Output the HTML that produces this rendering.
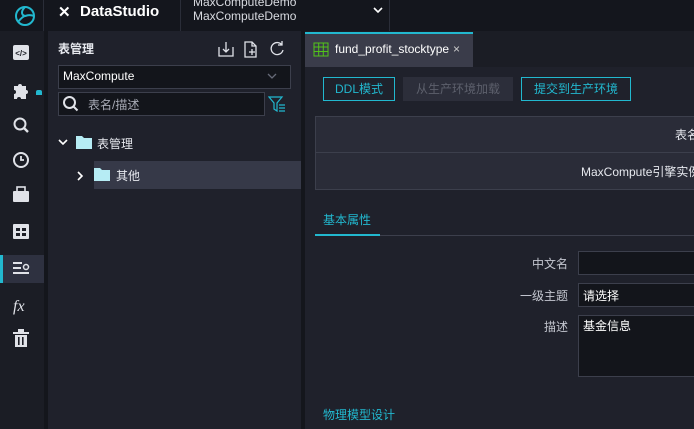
<!DOCTYPE html>
<html><head><meta charset="utf-8"><style>
*{margin:0;padding:0;box-sizing:border-box}
body{width:694px;height:429px;overflow:hidden;background:#1f212b;font-family:"Liberation Sans","Noto Sans CJK SC",sans-serif;color:#e6e8ee;font-size:12px;position:relative}
.a{position:absolute;white-space:nowrap}
</style></head><body>
<!-- top bar -->
<div class="a" style="left:0;top:0;width:694px;height:31px;background:#14161d"></div>
<div class="a" style="left:43px;top:0;width:1px;height:31px;background:#2a2d38"></div>
<div class="a" style="left:180px;top:0;width:1px;height:31px;background:#2a2d38"></div>
<div class="a" style="left:389px;top:0;width:1px;height:31px;background:#2a2d38"></div>
<svg class="a" style="left:12px;top:3px" width="26" height="26" viewBox="0 0 26 26" fill="none" stroke="#22b8cf" stroke-width="2"><circle cx="13" cy="13" r="9"/><path d="M13 4c-4 4-4 8 0 9M22 13c-5-2-8 0-9 0M6 19c3-4 6-6 7-6"/></svg>
<div class="a" style="left:58px;top:3px;font-size:15px;font-weight:bold;color:#fff">✕</div>
<div class="a" style="left:80px;top:3px;font-size:15px;font-weight:bold;color:#fff">DataStudio</div>
<div class="a" style="left:193px;top:-5px;font-size:12px;color:#d8dae0;line-height:14px">MaxComputeDemo<br>MaxComputeDemo</div>
<svg class="a" style="left:372px;top:5px" width="12" height="10"><path d="M2 3l4 4 4-4" stroke="#fff" stroke-width="1.6" fill="none"/></svg>
<!-- left icon bar -->
<div class="a" style="left:0;top:31px;width:44px;height:398px;background:#1b1d25"></div>
<div class="a" style="left:44px;top:31px;width:4px;height:398px;background:#14161c"></div>
<div class="a" style="left:0;top:255px;width:44px;height:28px;background:#2e3140"></div>
<div class="a" style="left:0;top:255px;width:3px;height:28px;background:#22b8cf"></div>
<svg class="a" style="left:10px;top:40px" width="24" height="320" fill="#e0e2e8">
<rect x="3" y="5" width="16" height="15" rx="2"/><text x="11" y="16" font-size="8" fill="#1b1d25" text-anchor="middle" font-weight="bold">&lt;/&gt;</text>
<path d="M4 46h4a2 2 0 014 0h4v4a2 2 0 010 4v5h-5a2 2 0 00-4 0H4v-5a2 2 0 000-4z"/>
<circle cx="10" cy="84" r="5.5" fill="none" stroke="#e0e2e8" stroke-width="2"/><path d="M14 88l4 4" stroke="#e0e2e8" stroke-width="2.4"/>
<circle cx="11" cy="120" r="7" fill="none" stroke="#e0e2e8" stroke-width="2"/><path d="M11 116v4h3" stroke="#e0e2e8" stroke-width="1.8" fill="none"/>
<rect x="3" y="151" width="16" height="11" rx="1"/><rect x="7" y="147" width="8" height="5" fill="none" stroke="#e0e2e8" stroke-width="1.6"/>
<rect x="3" y="184" width="16" height="15" rx="1"/><rect x="6" y="188" width="4" height="3" fill="#1b1d25"/><rect x="12" y="188" width="4" height="3" fill="#1b1d25"/><rect x="6" y="193" width="4" height="3" fill="#1b1d25"/><rect x="12" y="193" width="4" height="3" fill="#1b1d25"/>
<rect x="3" y="222" width="9" height="2"/><rect x="3" y="227" width="8" height="2"/><rect x="3" y="232" width="16" height="2"/><circle cx="16" cy="227" r="2.5" fill="none" stroke="#e0e2e8" stroke-width="1.5"/>
<text x="3" y="271" font-size="16" font-style="italic" font-family="Liberation Serif">fx</text>
<rect x="3" y="292" width="16" height="2"/><rect x="8" y="289" width="6" height="3"/><rect x="5" y="295" width="12" height="12"/><rect x="8" y="297" width="1.6" height="8" fill="#1b1d25"/><rect x="12" y="297" width="1.6" height="8" fill="#1b1d25"/>
</svg>
<div class="a" style="left:36px;top:90px;width:6px;height:5px;background:#22b8cf;border-radius:2px 2px 0 0"></div>
<!-- sidebar -->
<div class="a" style="left:48px;top:31px;width:253px;height:398px;background:#1f212b"></div>
<div class="a" style="left:58px;top:40px;font-size:12px;font-weight:bold">表管理</div>
<svg class="a" style="left:216px;top:40px" width="72" height="18" fill="none" stroke="#e0e2e8" stroke-width="1.3">
<path d="M3 7v9h14V7M10 2v10M7 9l3 3 3-3"/>
<path d="M29 2h7l4 4v11H29zM36 2v4h4M33 12h6M36 9v6"/>
<path d="M66 5a6 6 0 10 1 5M66 1v4h-4"/>
</svg>
<div class="a" style="left:58px;top:65px;width:233px;height:24px;border:1px solid #3c3f4c;background:#13151b"></div>
<div class="a" style="left:63px;top:69px;font-size:12px;color:#fff">MaxCompute</div>
<svg class="a" style="left:266px;top:71px" width="12" height="10"><path d="M2 3l4 4 4-4" stroke="#666a78" stroke-width="1.3" fill="none"/></svg>
<div class="a" style="left:58px;top:92px;width:207px;height:24px;border:1px solid #3c3f4c;background:#13151b"></div>
<svg class="a" style="left:62px;top:95px" width="18" height="18" fill="none" stroke="#e0e2e8" stroke-width="2"><circle cx="7.5" cy="7.5" r="5.5"/><path d="M11.5 11.5l4 4"/></svg>
<div class="a" style="left:88px;top:96px;font-size:12px;color:#a8abb6">表名/描述</div>
<svg class="a" style="left:268px;top:95px" width="20" height="18" fill="none" stroke="#22b8cf" stroke-width="1.2"><path d="M1 2h13l-5 6v8l-3-2V8z"/><path d="M11 10h6M11 13h6M11 16h6"/></svg>
<svg class="a" style="left:57px;top:137px" width="12" height="10"><path d="M2 3l4 4 4-4" stroke="#fff" stroke-width="1.6" fill="none"/></svg>
<svg class="a" style="left:75px;top:134px" width="18" height="16"><path d="M1 2h6l2 2h8v11H1z" fill="#b6ecf4"/></svg>
<div class="a" style="left:97px;top:135px;font-size:12px">表管理</div>
<div class="a" style="left:94px;top:161px;width:207px;height:28px;background:#363948"></div>
<svg class="a" style="left:75px;top:170px" width="10" height="12"><path d="M3 2l4 4-4 4" stroke="#fff" stroke-width="1.6" fill="none"/></svg>
<svg class="a" style="left:93px;top:166px" width="18" height="16"><path d="M1 2h6l2 2h8v11H1z" fill="#b6ecf4"/></svg>
<div class="a" style="left:116px;top:167px;font-size:12px">其他</div>
<div class="a" style="left:301px;top:31px;width:4px;height:398px;background:#14161c"></div>
<!-- main -->
<div class="a" style="left:305px;top:31px;width:389px;height:36px;background:#1b1d25"></div>
<div class="a" style="left:305px;top:32px;width:168px;height:35px;background:#3a3c4a;border-top:2px solid #22b8cf"></div>
<svg class="a" style="left:313px;top:42px" width="16" height="15" fill="none" stroke="#52c41a" stroke-width="1"><rect x="1" y="1" width="14" height="13"/><path d="M1 5h14M1 9.5h14M5.7 1v13M10.3 1v13"/></svg>
<div class="a" style="left:335px;top:42px;font-size:12px;color:#fff">fund_profit_stocktype</div>
<div class="a" style="left:453px;top:42px;font-size:12px;color:#ccc">×</div>
<div class="a" style="left:323px;top:77px;width:72px;height:24px;border:1px solid #22b8cf;color:#22b8cf;text-align:center;line-height:22px">DDL模式</div>
<div class="a" style="left:403px;top:77px;width:110px;height:24px;background:#2c2e3a;color:#5d606c;text-align:center;line-height:24px">从生产环境加载</div>
<div class="a" style="left:521px;top:77px;width:110px;height:24px;border:1px solid #22b8cf;color:#22b8cf;text-align:center;line-height:22px">提交到生产环境</div>
<div class="a" style="left:315px;top:116px;width:390px;height:74px;border:1px solid #3c3f4c;background:#2a2c38"></div>
<div class="a" style="left:315px;top:152px;width:390px;height:1px;background:#3c3f4c"></div>
<div class="a" style="left:675px;top:126px;font-size:12px">表名</div>
<div class="a" style="left:581px;top:163px;font-size:12px">MaxCompute引擎实例</div>
<div class="a" style="left:323px;top:211px;font-size:12px;color:#22b8cf">基本属性</div>
<div class="a" style="left:315px;top:235px;width:379px;height:1px;background:#3c3f4c"></div>
<div class="a" style="left:315px;top:234px;width:65px;height:2px;background:#22b8cf"></div>
<div class="a" style="left:532px;top:255px;font-size:12px;color:#c4c7d0">中文名</div>
<div class="a" style="left:578px;top:251px;width:130px;height:24px;border:1px solid #3c3f4c;background:#13151b"></div>
<div class="a" style="left:520px;top:287px;font-size:12px;color:#c4c7d0">一级主题</div>
<div class="a" style="left:578px;top:283px;width:130px;height:24px;border:1px solid #3c3f4c;background:#13151b"></div>
<div class="a" style="left:583px;top:287px;font-size:12px;color:#fff">请选择</div>
<div class="a" style="left:544px;top:318px;font-size:12px;color:#c4c7d0">描述</div>
<div class="a" style="left:578px;top:315px;width:130px;height:62px;border:1px solid #3c3f4c;background:#13151b"></div>
<div class="a" style="left:583px;top:317px;font-size:12px;color:#fff">基金信息</div>
<div class="a" style="left:323px;top:406px;font-size:12px;color:#22b8cf">物理模型设计</div>
</body></html>
